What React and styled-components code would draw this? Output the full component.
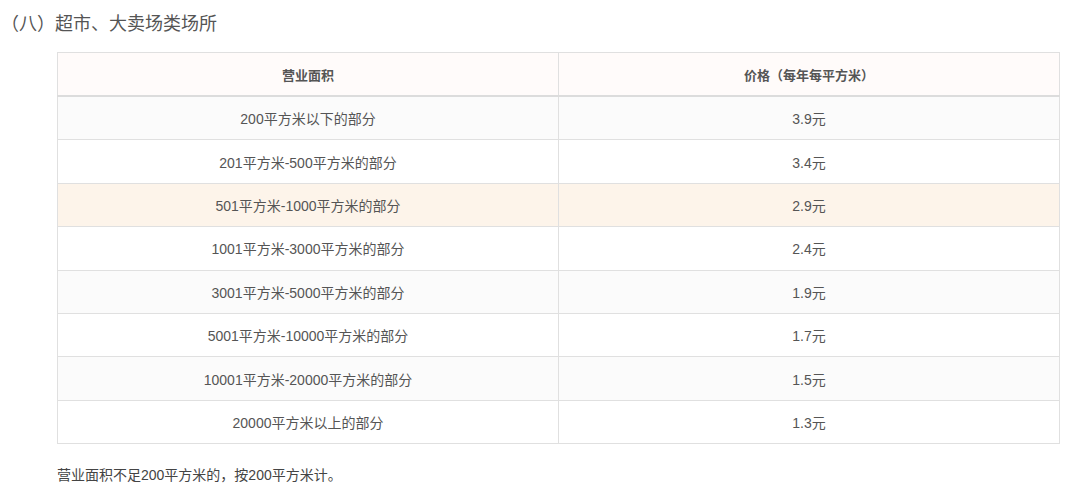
import React from 'react'
import styled, { createGlobalStyle } from 'styled-components';

const rows = [
    ['200平方米以下的部分', '3.9元'],
    ['201平方米-500平方米的部分', '3.4元'],
    ['501平方米-1000平方米的部分', '2.9元'],
    ['1001平方米-3000平方米的部分', '2.4元'],
    ['3001平方米-5000平方米的部分', '1.9元'],
    ['5001平方米-10000平方米的部分', '1.7元'],
    ['10001平方米-20000平方米的部分', '1.5元'],
    ['20000平方米以上的部分', '1.3元'],
];

export default function App() {
    return (
        <Page>
            <GlobalStyle />
            <Heading>（八）超市、大卖场类场所</Heading>
            <Body>
                <Table>
                    <thead>
                        <tr>
                            <Th>营业面积</Th>
                            <Th>价格（每年每平方米）</Th>
                        </tr>
                    </thead>
                    <tbody>
                        {rows.map(([area, price], i) => (
                            <Row key={area} $striped={i % 2 === 0} $active={i === 2}>
                                <Td>{area}</Td>
                                <Td>{price}</Td>
                            </Row>
                        ))}
                    </tbody>
                </Table>
                <Note>营业面积不足200平方米的，按200平方米计。</Note>
            </Body>
        </Page>
    )
}

const GlobalStyle = createGlobalStyle`
    body{
        margin:0;
        background:#fff;
        font-family:"Liberation Sans","Noto Sans CJK SC",sans-serif;
        color:#555;
    }
`;

const Page = styled.div`
    padding:11px 8px 0 1px;
`;

const Heading = styled.h3`
    margin:0;
    font-size:18px;
    font-weight:normal;
    line-height:26px;
    color:#555;
`;

const Body = styled.div`
    padding:15px 0 0 56px;
`;

const Table = styled.table`
    width:1003px;
    border-collapse:collapse;
    table-layout:fixed;
    border:1px solid #e0e0e0;
    font-size:14px;
`;

const Th = styled.th`
    height:42px;
    padding:0;
    background:#fffbfa;
    border:1px solid #e0e0e0;
    border-bottom:2px solid #dcdcdc;
    font-size:13px;
    font-weight:bold;
    color:#555;
    text-align:center;
`;

const Row = styled.tr`
    background:${props => props.$active ? '#fdf4ea' : props.$striped ? '#fbfbfb' : '#fff'};
`;

const Td = styled.td`
    height:42.4px;
    padding:0;
    border:1px solid #e0e0e0;
    text-align:center;
    color:#555;
`;

const Note = styled.p`
    margin:22px 0 0;
    font-size:14px;
    line-height:18px;
    color:#444;
`;
